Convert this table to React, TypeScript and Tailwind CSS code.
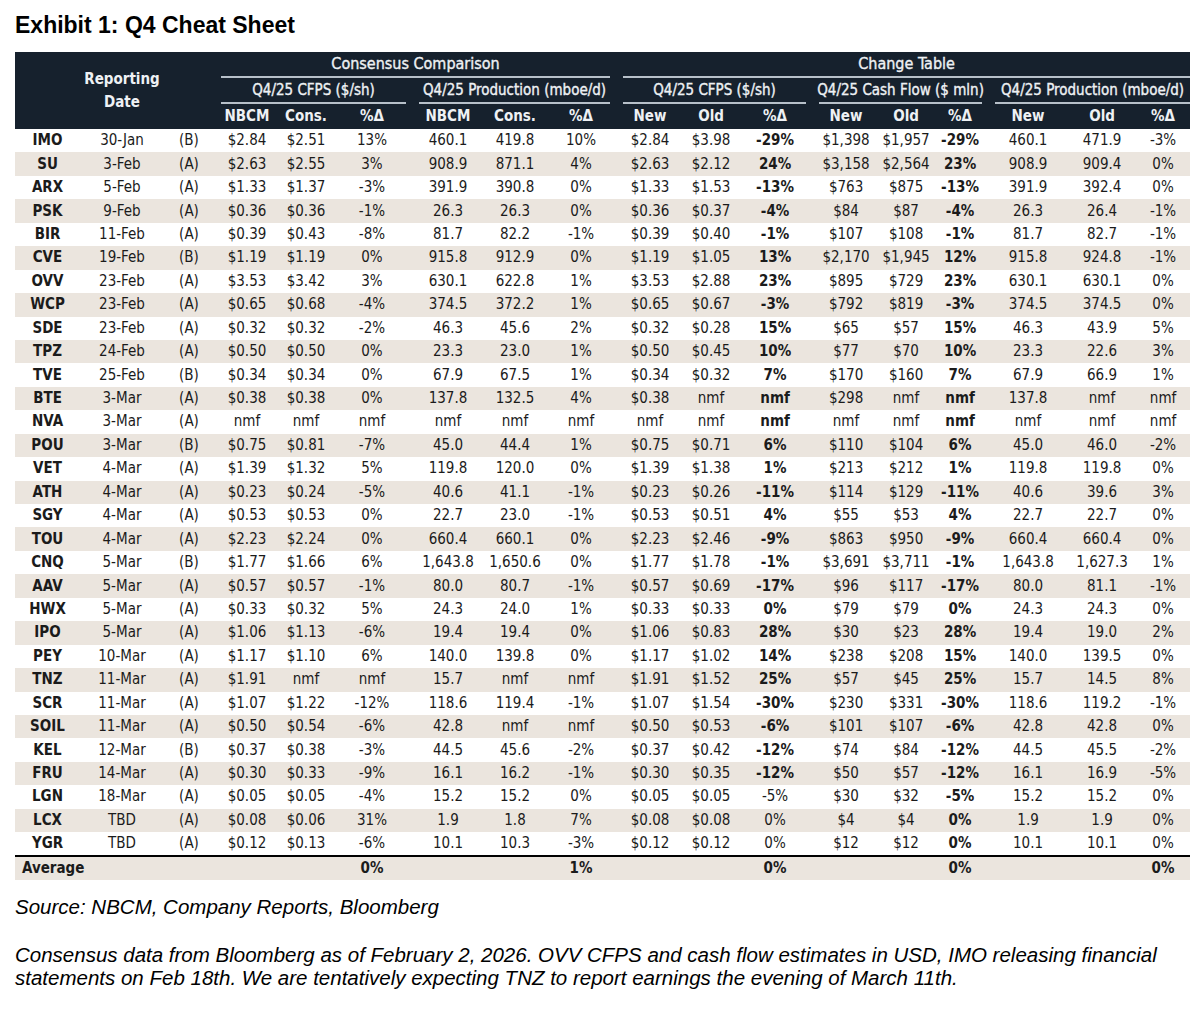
import React from 'react';

// --- Data: one row per company ---
// [ticker, date, flag, cons CFPS (NBCM, Cons, %), cons prod (NBCM, Cons, %),
//  chg CFPS (New, Old, %), chg CF (New, Old, %), chg prod (New, Old, %)]
const rows: string[][] = [
  ['IMO', '30-Jan', '(B)', '$2.84', '$2.51', '13%', '460.1', '419.8', '10%', '$2.84', '$3.98', '-29%', '$1,398', '$1,957', '-29%', '460.1', '471.9', '-3%'],
  ['SU', '3-Feb', '(A)', '$2.63', '$2.55', '3%', '908.9', '871.1', '4%', '$2.63', '$2.12', '24%', '$3,158', '$2,564', '23%', '908.9', '909.4', '0%'],
  ['ARX', '5-Feb', '(A)', '$1.33', '$1.37', '-3%', '391.9', '390.8', '0%', '$1.33', '$1.53', '-13%', '$763', '$875', '-13%', '391.9', '392.4', '0%'],
  ['PSK', '9-Feb', '(A)', '$0.36', '$0.36', '-1%', '26.3', '26.3', '0%', '$0.36', '$0.37', '-4%', '$84', '$87', '-4%', '26.3', '26.4', '-1%'],
  ['BIR', '11-Feb', '(A)', '$0.39', '$0.43', '-8%', '81.7', '82.2', '-1%', '$0.39', '$0.40', '-1%', '$107', '$108', '-1%', '81.7', '82.7', '-1%'],
  ['CVE', '19-Feb', '(B)', '$1.19', '$1.19', '0%', '915.8', '912.9', '0%', '$1.19', '$1.05', '13%', '$2,170', '$1,945', '12%', '915.8', '924.8', '-1%'],
  ['OVV', '23-Feb', '(A)', '$3.53', '$3.42', '3%', '630.1', '622.8', '1%', '$3.53', '$2.88', '23%', '$895', '$729', '23%', '630.1', '630.1', '0%'],
  ['WCP', '23-Feb', '(A)', '$0.65', '$0.68', '-4%', '374.5', '372.2', '1%', '$0.65', '$0.67', '-3%', '$792', '$819', '-3%', '374.5', '374.5', '0%'],
  ['SDE', '23-Feb', '(A)', '$0.32', '$0.32', '-2%', '46.3', '45.6', '2%', '$0.32', '$0.28', '15%', '$65', '$57', '15%', '46.3', '43.9', '5%'],
  ['TPZ', '24-Feb', '(A)', '$0.50', '$0.50', '0%', '23.3', '23.0', '1%', '$0.50', '$0.45', '10%', '$77', '$70', '10%', '23.3', '22.6', '3%'],
  ['TVE', '25-Feb', '(B)', '$0.34', '$0.34', '0%', '67.9', '67.5', '1%', '$0.34', '$0.32', '7%', '$170', '$160', '7%', '67.9', '66.9', '1%'],
  ['BTE', '3-Mar', '(A)', '$0.38', '$0.38', '0%', '137.8', '132.5', '4%', '$0.38', 'nmf', 'nmf', '$298', 'nmf', 'nmf', '137.8', 'nmf', 'nmf'],
  ['NVA', '3-Mar', '(A)', 'nmf', 'nmf', 'nmf', 'nmf', 'nmf', 'nmf', 'nmf', 'nmf', 'nmf', 'nmf', 'nmf', 'nmf', 'nmf', 'nmf', 'nmf'],
  ['POU', '3-Mar', '(B)', '$0.75', '$0.81', '-7%', '45.0', '44.4', '1%', '$0.75', '$0.71', '6%', '$110', '$104', '6%', '45.0', '46.0', '-2%'],
  ['VET', '4-Mar', '(A)', '$1.39', '$1.32', '5%', '119.8', '120.0', '0%', '$1.39', '$1.38', '1%', '$213', '$212', '1%', '119.8', '119.8', '0%'],
  ['ATH', '4-Mar', '(A)', '$0.23', '$0.24', '-5%', '40.6', '41.1', '-1%', '$0.23', '$0.26', '-11%', '$114', '$129', '-11%', '40.6', '39.6', '3%'],
  ['SGY', '4-Mar', '(A)', '$0.53', '$0.53', '0%', '22.7', '23.0', '-1%', '$0.53', '$0.51', '4%', '$55', '$53', '4%', '22.7', '22.7', '0%'],
  ['TOU', '4-Mar', '(A)', '$2.23', '$2.24', '0%', '660.4', '660.1', '0%', '$2.23', '$2.46', '-9%', '$863', '$950', '-9%', '660.4', '660.4', '0%'],
  ['CNQ', '5-Mar', '(B)', '$1.77', '$1.66', '6%', '1,643.8', '1,650.6', '0%', '$1.77', '$1.78', '-1%', '$3,691', '$3,711', '-1%', '1,643.8', '1,627.3', '1%'],
  ['AAV', '5-Mar', '(A)', '$0.57', '$0.57', '-1%', '80.0', '80.7', '-1%', '$0.57', '$0.69', '-17%', '$96', '$117', '-17%', '80.0', '81.1', '-1%'],
  ['HWX', '5-Mar', '(A)', '$0.33', '$0.32', '5%', '24.3', '24.0', '1%', '$0.33', '$0.33', '0%', '$79', '$79', '0%', '24.3', '24.3', '0%'],
  ['IPO', '5-Mar', '(A)', '$1.06', '$1.13', '-6%', '19.4', '19.4', '0%', '$1.06', '$0.83', '28%', '$30', '$23', '28%', '19.4', '19.0', '2%'],
  ['PEY', '10-Mar', '(A)', '$1.17', '$1.10', '6%', '140.0', '139.8', '0%', '$1.17', '$1.02', '14%', '$238', '$208', '15%', '140.0', '139.5', '0%'],
  ['TNZ', '11-Mar', '(A)', '$1.91', 'nmf', 'nmf', '15.7', 'nmf', 'nmf', '$1.91', '$1.52', '25%', '$57', '$45', '25%', '15.7', '14.5', '8%'],
  ['SCR', '11-Mar', '(A)', '$1.07', '$1.22', '-12%', '118.6', '119.4', '-1%', '$1.07', '$1.54', '-30%', '$230', '$331', '-30%', '118.6', '119.2', '-1%'],
  ['SOIL', '11-Mar', '(A)', '$0.50', '$0.54', '-6%', '42.8', 'nmf', 'nmf', '$0.50', '$0.53', '-6%', '$101', '$107', '-6%', '42.8', '42.8', '0%'],
  ['KEL', '12-Mar', '(B)', '$0.37', '$0.38', '-3%', '44.5', '45.6', '-2%', '$0.37', '$0.42', '-12%', '$74', '$84', '-12%', '44.5', '45.5', '-2%'],
  ['FRU', '14-Mar', '(A)', '$0.30', '$0.33', '-9%', '16.1', '16.2', '-1%', '$0.30', '$0.35', '-12%', '$50', '$57', '-12%', '16.1', '16.9', '-5%'],
  ['LGN', '18-Mar', '(A)', '$0.05', '$0.05', '-4%', '15.2', '15.2', '0%', '$0.05', '$0.05', '-5%', '$30', '$32', '-5%', '15.2', '15.2', '0%'],
  ['LCX', 'TBD', '(A)', '$0.08', '$0.06', '31%', '1.9', '1.8', '7%', '$0.08', '$0.08', '0%', '$4', '$4', '0%', '1.9', '1.9', '0%'],
  ['YGR', 'TBD', '(A)', '$0.12', '$0.13', '-6%', '10.1', '10.3', '-3%', '$0.12', '$0.12', '0%', '$12', '$12', '0%', '10.1', '10.1', '0%'],
];

const averages: Record<number, string> = { 5: '0%', 8: '1%', 11: '0%', 14: '0%', 17: '0%' };

const tableFont = { fontFamily: "'Liberation Sans Narrow', 'DejaVu Sans Condensed', 'Roboto Condensed', Lato, sans-serif" };
const arial = { fontFamily: "'Liberation Sans', Arial, sans-serif" };

const cellWeight = (col: number, rowIdx: number) => {
  if (col === 0) return 'font-bold';
  if (col === 11 && rowIdx < 28) return 'font-bold';
  if (col === 14) return 'font-bold';
  return 'font-normal';
};

// group title with the thin rule under it; regular weight thickened by a stroke so it keeps its width
const GroupHead: React.FC<{ label: string; last?: boolean; big?: boolean }> = ({ label, last, big }) => (
  <div className={`h-[26px] ml-[7px] ${last ? 'mr-0' : 'mr-[6px]'} ${big ? 'text-[16px]' : 'text-[15px]'} border-b-2 border-[#b7c0c9] flex items-center justify-center whitespace-nowrap font-normal [-webkit-text-stroke:0.35px_#eef1f4]`}>
    {label}
  </div>
);

export default function App() {
  return (
    <div className="w-[1200px] min-h-[1015px] bg-white pl-[15px] pt-[11px] text-[#1b1b1b]">
      <h1 className="text-[23px] leading-[28px] font-bold text-black" style={arial}>
        Exhibit 1: Q4 Cheat Sheet
      </h1>

      <table className="mt-[13px] w-[1175px] table-fixed border-collapse text-[15px]" style={tableFont}>
        <colgroup>
          <col className="w-[65px]" />
          <col className="w-[84px]" />
          <col className="w-[50px]" />
          <col className="w-[66px]" />
          <col className="w-[52px]" />
          <col className="w-[80px]" />
          <col className="w-[72px]" />
          <col className="w-[62px]" />
          <col className="w-[70px]" />
          <col className="w-[68px]" />
          <col className="w-[54px]" />
          <col className="w-[74px]" />
          <col className="w-[68px]" />
          <col className="w-[52px]" />
          <col className="w-[56px]" />
          <col className="w-[80px]" />
          <col className="w-[68px]" />
          <col className="w-[54px]" />
        </colgroup>
        <thead className="bg-[#16212d] text-[#eef1f4]">
          <tr>
            <th rowSpan={3} className="p-0" />
            <th rowSpan={3} className="p-0 font-bold leading-[23px] align-middle">
              Reporting<br />Date
            </th>
            <th rowSpan={3} className="p-0" />
            <th colSpan={6} className="p-0">
              <GroupHead label="Consensus Comparison" big />
            </th>
            <th colSpan={9} className="p-0">
              <GroupHead label="Change Table" big last />
            </th>
          </tr>
          <tr>
            <th colSpan={3} className="p-0"><GroupHead label="Q4/25 CFPS ($/sh)" /></th>
            <th colSpan={3} className="p-0"><GroupHead label="Q4/25 Production (mboe/d)" /></th>
            <th colSpan={3} className="p-0"><GroupHead label="Q4/25 CFPS ($/sh)" /></th>
            <th colSpan={3} className="p-0"><GroupHead label="Q4/25 Cash Flow ($ mln)" /></th>
            <th colSpan={3} className="p-0"><GroupHead label="Q4/25 Production (mboe/d)" last /></th>
          </tr>
          <tr className="h-[25px]">
            {['NBCM', 'Cons.', '%Δ', 'NBCM', 'Cons.', '%Δ', 'New', 'Old', '%Δ', 'New', 'Old', '%Δ', 'New', 'Old', '%Δ'].map((s, i) => (
              <th key={i} className="p-0 font-bold">{s}</th>
            ))}
          </tr>
        </thead>
        <tbody>
          {rows.map((r, i) => (
            <tr key={r[0]} className={i % 2 === 1 ? 'bg-[#ebe5de]' : 'bg-white'}>
              {r.map((v, c) => (
                <td key={c} className={`h-[23.45px] p-0 text-center leading-none ${cellWeight(c, i)}`}>
                  {v}
                </td>
              ))}
            </tr>
          ))}
          <tr className="bg-[#ebe5de] border-t-2 border-black">
            <td colSpan={3} className="h-[24px] p-0 pl-[7px] text-left font-bold">Average</td>
            {Array.from({ length: 15 }).map((_, k) => (
              <td key={k} className="p-0 text-center font-bold">{averages[k + 3] ?? ''}</td>
            ))}
          </tr>
        </tbody>
      </table>

      <div className="text-[20.5px] italic text-black" style={arial}>
        <p className="mt-[15px] leading-[24px]">Source: NBCM, Company Reports, Bloomberg</p>
        <p className="mt-[24px] leading-[23px]">
          Consensus data from Bloomberg as of February 2, 2026. OVV CFPS and cash flow estimates in USD, IMO releasing financial
          <br />
          statements on Feb 18th. We are tentatively expecting TNZ to report earnings the evening of March 11th.
        </p>
      </div>
    </div>
  );
}
